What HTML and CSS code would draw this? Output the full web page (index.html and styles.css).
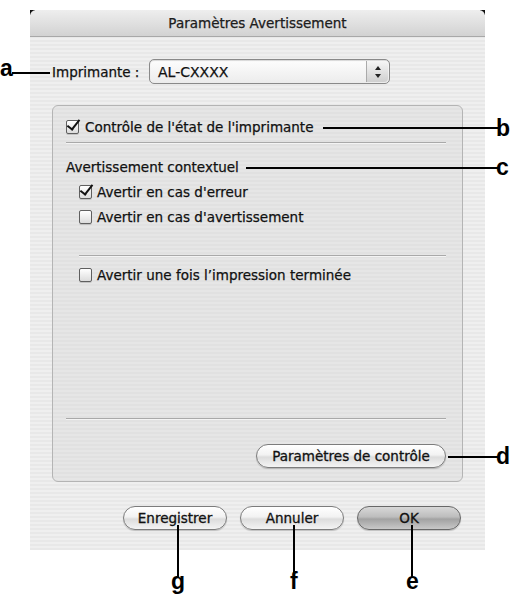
FILE: index.html
```html
<!DOCTYPE html>
<html lang="fr">
<head>
<meta charset="utf-8">
<title>Paramètres Avertissement</title>
<link rel="stylesheet" href="styles.css">
</head>
<body>
<div class="page">
  <div class="window">
    <div class="titlebar">Paramètres Avertissement</div>
    <div class="content">
      <div class="printer-row">
        <span class="printer-label">Imprimante :</span>
        <div class="popup">
          <span class="popup-value">AL-CXXXX</span>
          <span class="popup-arrows">
            <svg width="8" height="14" viewBox="0 0 8 14"><path d="M4 1 L7 5 H1 Z" fill="#222"/><path d="M4 13 L7 9 H1 Z" fill="#222"/></svg>
          </span>
        </div>
      </div>

      <div class="group">
        <label class="row row-top">
          <span class="cb checked"></span>
          <span>Contrôle de l'état de l'imprimante</span>
        </label>
        <div class="sep sep1"></div>
        <div class="row heading">Avertissement contextuel</div>
        <label class="row indent r2">
          <span class="cb checked"></span>
          <span>Avertir en cas d'erreur</span>
        </label>
        <label class="row indent r3">
          <span class="cb"></span>
          <span>Avertir en cas d'avertissement</span>
        </label>
        <div class="sep sep2"></div>
        <label class="row indent r4">
          <span class="cb"></span>
          <span>Avertir une fois l’impression terminée</span>
        </label>
        <div class="spacer"></div>
        <div class="sep sep3"></div>
        <div class="group-actions">
          <button class="btn btn-monitor">Paramètres de contrôle</button>
        </div>
      </div>

      <div class="actions">
        <button class="btn btn-bottom">Enregistrer</button>
        <button class="btn btn-bottom">Annuler</button>
        <button class="btn btn-bottom btn-default">OK</button>
      </div>
    </div>
  </div>

  <div class="callouts">
    <span class="lbl lbl-a">a</span><span class="hline line-a"></span>
    <span class="hline line-b"></span><span class="lbl lbl-b">b</span>
    <span class="hline line-c"></span><span class="lbl lbl-c">c</span>
    <span class="hline line-d"></span><span class="lbl lbl-d">d</span>
    <span class="vline line-g"></span><span class="lbl lbl-g">g</span>
    <span class="vline line-f"></span><span class="lbl lbl-f">f</span>
    <span class="vline line-e"></span><span class="lbl lbl-e">e</span>
  </div>
</div>
</body>
</html>
```
FILE: styles.css
```css
html, body {
  margin: 0;
  padding: 0;
  background: #ffffff;
}
.page {
  position: relative;
  width: 518px;
  height: 600px;
  box-sizing: border-box;
  padding: 10px 0 0 30px;
  font-family: "DejaVu Sans", "Liberation Sans", sans-serif;
  font-size: 13.5px;
  color: #111;
}
.window {
  position: relative;
  z-index: 0;
  width: 455px;
  height: 540px;
  display: flex;
  flex-direction: column;
  background: repeating-linear-gradient(180deg, #efefef 0 2px, #e8e8e8 2px 4px);
  -webkit-text-stroke: 0.25px #111;
}
.titlebar {
  position: relative;
  height: 27px;
  line-height: 27px;
  text-align: center;
  font-size: 13.5px;
  color: #222;
  background: linear-gradient(#eeeeee, #d2d2d2);
  border-bottom: 1px solid #a8a8a8;
  border-radius: 6px 6px 0 0;
  box-sizing: border-box;
}
.titlebar::before,
.titlebar::after {
  content: "";
  position: absolute;
  top: 0;
  width: 5px;
  height: 5px;
  z-index: -1;
  background: #111;
}
.titlebar::before { left: 0; }
.titlebar::after { right: 0; }

.content {
  flex: 1;
  display: flex;
  flex-direction: column;
  padding: 22px 0 0 22px;
}
.printer-row {
  display: flex;
  align-items: center;
  height: 25px;
}
.printer-label {
  width: 97px;
  white-space: nowrap;
}
.popup {
  width: 241px;
  height: 25px;
  box-sizing: border-box;
  border: 1px solid #8a8a8a;
  border-radius: 5px;
  background: linear-gradient(#fdfdfd, #ececec);
  display: flex;
  align-items: center;
  box-shadow: inset 0 1px 1px rgba(0,0,0,0.15);
}
.popup-value {
  flex: 1;
  padding-left: 8px;
  font-size: 14px;
}
.popup-arrows {
  width: 21px;
  height: 21px;
  margin-right: 1px;
  border-radius: 0 4px 4px 0;
  border-left: 1px solid #aaa;
  background: linear-gradient(#f6f6f6, #cfcfcf);
  display: flex;
  align-items: center;
  justify-content: center;
}

.group {
  margin-top: 21px;
  width: 411px;
  height: 377px;
  box-sizing: border-box;
  border: 1px solid #b4b4b4;
  border-radius: 6px;
  background: repeating-linear-gradient(180deg, #e6e6e6 0 2px, #e1e1e1 2px 4px);
  display: flex;
  flex-direction: column;
  padding: 0 16px 0 13px;
}
.row {
  display: flex;
  align-items: center;
  height: 20px;
  gap: 5px;
  font-size: 13.5px;
  white-space: nowrap;
}
.row-top { margin-top: 11px; gap: 6px; }
.heading { margin-top: 13px; }
.indent { padding-left: 13px; }
.r2 { margin-top: 5px; }
.r3 { margin-top: 5px; }
.r4 { margin-top: 8px; }
.sep {
  height: 1px;
  background: #a9a9a9;
  border-bottom: 1px solid #f4f4f4;
}
.sep1 { margin-top: 5px; }
.sep2 { margin-top: 28px; margin-left: 13px; }
.spacer { flex: 1; }
.cb {
  width: 13px;
  height: 14px;
  box-sizing: border-box;
  border: 1px solid #5f5f5f;
  border-radius: 2px;
  background: linear-gradient(#ffffff, #dcdcdc);
  position: relative;
  flex: none;
  box-shadow: 0 1px 0 rgba(0,0,0,0.15);
}
.cb.checked::after {
  content: "";
  position: absolute;
  left: 3px;
  top: -4px;
  width: 5px;
  height: 11px;
  border-right: 2px solid #111;
  border-bottom: 2px solid #111;
  transform: rotate(38deg);
}
.group-actions {
  display: flex;
  justify-content: flex-end;
  margin-top: 24px;
  margin-bottom: 13px;
}
.btn {
  font-family: inherit;
  font-size: 13.5px;
  color: #111;
  box-sizing: border-box;
  border: 1px solid #7c7c7c;
  border-radius: 12px;
  background: linear-gradient(#ffffff 0%, #f2f2f2 45%, #dcdcdc 55%, #f4f4f4 100%);
  padding: 0;
  height: 24px;
  box-shadow: 0 1px 1px rgba(0,0,0,0.2);
  white-space: nowrap;
  -webkit-text-stroke: 0.3px #111;
}
.btn-monitor {
  width: 190px;
}
.actions {
  display: flex;
  gap: 13px;
  margin-top: 24px;
  padding-left: 71px;
}
.btn-bottom {
  width: 104px;
}
.btn-default {
  background: linear-gradient(#d8d8d8 0%, #bdbdbd 45%, #a2a2a2 55%, #c8c8c8 100%);
  border-color: #686868;
}

.callouts {
  position: absolute;
  inset: 0;
  pointer-events: none;
  font-family: "Liberation Sans", Arial, sans-serif;
  font-weight: bold;
  font-size: 23px;
  color: #000;
}
.lbl {
  position: absolute;
  line-height: 1;
}
.hline {
  position: absolute;
  height: 2px;
  background: #000;
}
.vline {
  position: absolute;
  width: 2px;
  background: #000;
}
.lbl-a { left: 0; top: 57px; }
.line-a { left: 12px; top: 72px; width: 38px; }
.line-b { left: 323px; top: 127px; width: 175px; }
.lbl-b { left: 496px; top: 117px; }
.line-c { left: 246px; top: 167px; width: 252px; }
.lbl-c { left: 496px; top: 156px; }
.line-d { left: 448px; top: 456px; width: 50px; }
.lbl-d { left: 496px; top: 445px; }
.line-g { left: 177px; top: 525px; height: 52px; }
.lbl-g { left: 171px; top: 570px; }
.line-f { left: 293px; top: 525px; height: 52px; }
.lbl-f { left: 290px; top: 570px; }
.line-e { left: 411px; top: 525px; height: 52px; }
.lbl-e { left: 406px; top: 570px; }
```
